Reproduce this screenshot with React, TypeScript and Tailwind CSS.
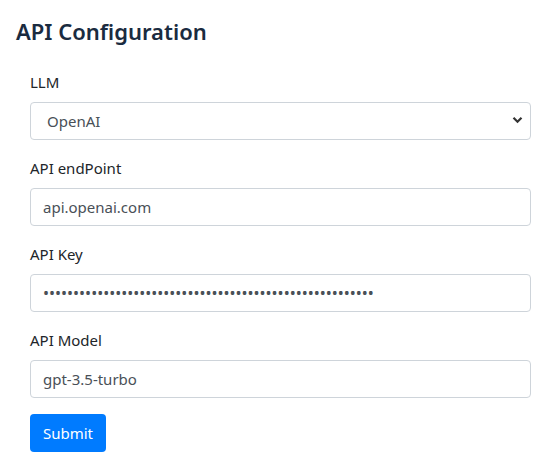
import { useState } from "react";

const font = { fontFamily: '"Noto Sans", "Open Sans", sans-serif' };

function Field({ label, children }: { label: string; children: React.ReactNode }) {
    return (
        <div className="mb-4">
            <label className="block mb-2 text-[15px] leading-6 text-[#212529]">{label}</label>
            {children}
        </div>
    );
}

const inputClass =
    "block w-full h-[38px] px-3 border border-[#ced4da] rounded-[4px] bg-white text-[15px] text-[#495057] outline-none";

export default function App() {
    const [llm, setLlm] = useState("openai");
    const [endpoint, setEndpoint] = useState("api.openai.com");
    const [apiKey, setApiKey] = useState("x".repeat(55));
    const [model, setModel] = useState("gpt-3.5-turbo");

    return (
        <div className="min-h-screen bg-white pt-[17px] px-4" style={font}>
            <h2 className="text-[22px] leading-[29px] font-semibold text-[#1a2b40] mb-6">API Configuration</h2>
            <form className="ml-[14px] w-[501px]" onSubmit={(e) => e.preventDefault()}>
                <Field label="LLM">
                    <div className="relative">
                        <select
                            value={llm}
                            onChange={(e) => setLlm(e.target.value)}
                            className={inputClass + " appearance-none pl-4"}
                        >
                            <option value="openai">OpenAI</option>
                            <option value="azure">Azure OpenAI</option>
                        </select>
                        <svg
                            className="absolute right-[8px] top-[14px] pointer-events-none"
                            width="11"
                            height="8"
                            viewBox="0 0 11 8"
                        >
                            <path d="M1.5 1.8 L5.5 5.8 L9.5 1.8" stroke="#333" strokeWidth="2.2" fill="none" />
                        </svg>
                    </div>
                </Field>
                <Field label="API endPoint">
                    <input className={inputClass} value={endpoint} onChange={(e) => setEndpoint(e.target.value)} />
                </Field>
                <Field label="API Key">
                    <input
                        type="password"
                        className={inputClass + " !text-[16px]"}
                        value={apiKey}
                        onChange={(e) => setApiKey(e.target.value)}
                    />
                </Field>
                <Field label="API Model">
                    <input className={inputClass} value={model} onChange={(e) => setModel(e.target.value)} />
                </Field>
                <button
                    type="submit"
                    className="h-[38px] w-[76px] rounded-[4px] bg-[#007bff] text-white text-[15px] leading-6"
                >
                    Submit
                </button>
            </form>
        </div>
    );
}
